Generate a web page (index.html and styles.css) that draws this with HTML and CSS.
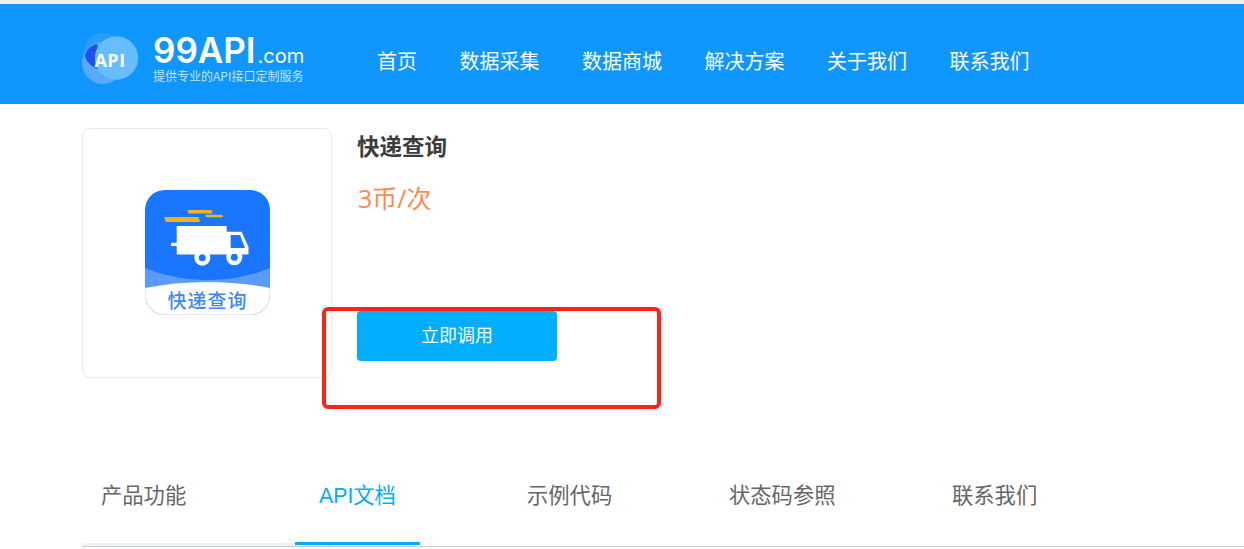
FILE: index.html
```html
<!DOCTYPE html>
<html lang="zh-CN">

<head>
    <meta charset="UTF-8">
    <meta name="viewport" content="width=device-width, initial-scale=1.0">
    <title>快递查询</title>
    <link rel="stylesheet" href="styles.css">
</head>

<body>
    <header class="site-header">
        <a class="logo" href="#">
            <span class="logo-mark">
                <svg width="60" height="60" viewBox="0 0 60 60">
                    <circle cx="21" cy="22" r="19" fill="#2a9dff"/>
                    <circle cx="21" cy="33" r="21" fill="#5aa9ff"/>
                    <path d="M3 26C4 20 8 16 15 14L24 40C13 40 5 34 3 26Z" fill="#1f50ee"/>
                    <circle cx="34.500" cy="28" r="21.700" fill="#66bdff"/>
                    <text class="logo-mark-text" x="28" y="36.500" text-anchor="middle">API</text>
                </svg>
            </span>
            <span class="logo-text">
                <span class="logo-name">99API<small>.com</small></span>
                <span class="logo-slogan">提供专业的API接口定制服务</span>
            </span>
        </a>
        <nav class="main-nav">
            <a href="#">首页</a>
            <a href="#">数据采集</a>
            <a href="#">数据商城</a>
            <a href="#">解决方案</a>
            <a href="#">关于我们</a>
            <a href="#">联系我们</a>
        </nav>
    </header>

    <main class="content">
        <section class="product">
            <div class="product-card">
                <svg class="product-icon" width="125" height="125" viewBox="0 0 125 125">
                    <defs>
                        <clipPath id="iconClip"><rect width="125" height="125" rx="20"/></clipPath>
                    </defs>
                    <g clip-path="url(#iconClip)">
                        <rect width="125" height="125" fill="#1a75ff"/>
                        <path d="M0 78C38 94 88 94 125 78V125H0Z" fill="#5b9bff"/>
                        <path d="M0 98C40 90 85 90 125 98V125H0Z" fill="#fff"/>
                        <path d="M19 27H53.500L55 32H21Z" fill="#f5b120"/>
                        <path d="M42.500 20H66.500L67.500 23.500H43.500Z" fill="#f5b120"/>
                        <path d="M60.500 24.700H77.300L78 27.300H61Z" fill="#f5b120"/>
                        <path d="M31.700 36H81.700V41.700H96.700L103.500 57V64.500H31.700V56H26V52.700H31.700Z" fill="#fff"/>
                        <path d="M85.700 45H95L100 58H85.700Z" fill="#1a75ff"/>
                        <circle cx="57.300" cy="67.700" r="8" fill="#fff"/>
                        <circle cx="57.300" cy="67.700" r="3.500" fill="#1a75ff"/>
                        <circle cx="89.300" cy="67.300" r="8" fill="#fff"/>
                        <circle cx="89.300" cy="67.300" r="3.500" fill="#1a75ff"/>
                        <text class="product-icon-text" x="62.500" y="118" text-anchor="middle">快递查询</text>
                    </g>
                    <path d="M0.500 99V105A19.500 19.500 0 0 0 20 124.500H105A19.500 19.500 0 0 0 124.500 105V99" fill="none" stroke="#e6e8ec"/>
                </svg>
            </div>
            <div class="product-info">
                <h1 class="product-title">快递查询</h1>
                <p class="product-price">3币/次</p>
                <button class="call-btn">立即调用</button>
            </div>
        </section>

        <nav class="tabs">
            <a class="tab tab-first" href="#">产品功能</a>
            <a class="tab active" href="#">API文档</a>
            <a class="tab" href="#">示例代码</a>
            <a class="tab" href="#">状态码参照</a>
            <a class="tab" href="#">联系我们</a>
        </nav>
    </main>

    <div class="red-mark"></div>
</body>

</html>
```

FILE: styles.css
```css
html, body {
    height: 549px;
    overflow: hidden;
}

body {
    margin: 0;
    border-top: 4px solid #eeeeee;
    background-color: #fff;
    font-family: "Open Sans", "Noto Sans CJK SC", sans-serif;
    box-sizing: border-box;
    position: relative;
}

a {
    text-decoration: none;
    color: inherit;
}

.site-header {
    display: flex;
    align-items: center;
    height: 100px;
    box-sizing: border-box;
    padding: 12px 0 0 82px;
    background-color: #0f97ff;
    color: #fff;
}

.logo {
    display: flex;
    align-items: center;
    width: 295px;
}

.logo-mark {
    display: block;
    width: 71px;
    height: 60px;
}

.logo-mark-text {
    font-family: "Open Sans", sans-serif;
    font-size: 18px;
    font-weight: 700;
    letter-spacing: 0.5px;
    fill: #fff;
}

.logo-text {
    display: flex;
    flex-direction: column;
}

.logo-name {
    font-family: "Inter", sans-serif;
    font-size: 35px;
    font-weight: 600;
    line-height: 28px;
    white-space: nowrap;
}

.logo-name small {
    font-size: 20px;
    font-weight: 400;
    line-height: 1;
    margin-left: 2px;
}

.logo-slogan {
    margin-top: 2px;
    font-family: "Noto Sans CJK SC", sans-serif;
    font-size: 12px;
    line-height: 16px;
    white-space: nowrap;
    color: rgba(255, 255, 255, 0.75);
}

.main-nav {
    display: flex;
    gap: 42.500px;
    font-size: 20px;
}

.content {
    padding: 24px 0 0 82px;
}

.product {
    display: flex;
}

.product-card {
    display: flex;
    align-items: center;
    justify-content: center;
    width: 250px;
    height: 250px;
    box-sizing: border-box;
    border: 1px solid #e3ebf3;
    border-radius: 8px;
}

.product-icon {
    display: block;
    margin-bottom: 1px;
}

.product-icon-text {
    font-family: "Noto Sans CJK SC", sans-serif;
    font-size: 19px;
    font-weight: 500;
    letter-spacing: 1px;
    fill: #3f87f5;
}

.product-info {
    display: flex;
    flex-direction: column;
    align-items: flex-start;
    margin-left: 25px;
}

.product-title {
    margin: 0;
    font-size: 22.500px;
    font-weight: 700;
    line-height: 38px;
    height: 36px;
    color: #3c3c3c;
}

.product-price {
    margin: 15px 0 0 1px;
    font-size: 25px;
    line-height: 38px;
    color: #ff8a4c;
}

.call-btn {
    width: 200px;
    height: 50px;
    margin-top: 94px;
    padding: 0 0 4px;
    border: none;
    border-radius: 4px;
    background-color: #00aeff;
    color: #fff;
    font-family: inherit;
    font-size: 18px;
    cursor: pointer;
}

.tabs {
    display: grid;
    grid-template-columns: 213px 208px 202px 223px 1fr;
    height: 80px;
    margin-top: 89px;
    border-bottom: 1px solid #c9ccd4;
    box-sizing: border-box;
    background: linear-gradient(#f0f0f7, #f0f0f7) 0 100% / 250px 3px no-repeat;
    font-family: "Liberation Sans", "Noto Sans CJK SC", sans-serif;
    font-size: 21.300px;
    color: #666;
}

.tab {
    justify-self: start;
    height: 75px;
    padding: 0 24px;
    line-height: 58px;
}

.tab-first {
    padding-left: 19px;
}

.tab.active {
    border-bottom: 3px solid #00aeff;
    color: #00aeff;
}

.red-mark {
    position: absolute;
    left: 322px;
    top: 303px;
    width: 339px;
    height: 102px;
    box-sizing: border-box;
    border: 4px solid #fb2418;
    border-radius: 6px;
}
```
